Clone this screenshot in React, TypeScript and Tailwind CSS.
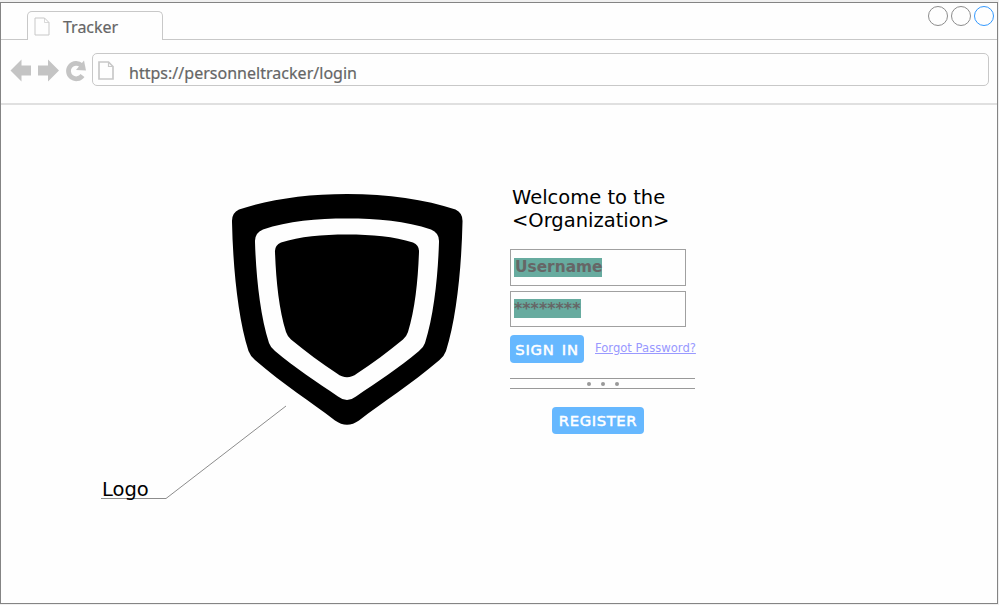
import React from "react";

const PageIcon = ({ className, width }: { className: string; width: number }) => (
  <svg className={className} viewBox="0 0 16 19" fill="none" stroke="#c8c8c8" strokeWidth={width}>
    <path d="M1 1H10.5L15 5.5V18H1Z" />
    <path d="M10.5 1V5.5H15" strokeWidth={width * 0.7} />
  </svg>
);

const Shield = () => (
  <svg className="block h-[234px] w-[234px]" viewBox="230 193 234 234">
    <path d="M347.300 194C306 194 269 199.500 239 209.500Q231.500 213 232 222C233 268 238 318 248.500 351Q250 355.500 255 360C284 385 311 402 335 420.500Q347 429 359 420.500C383 402 410 385 439.500 360Q444.500 355.500 446 351C456.500 318 461.500 268 462.500 222Q463 213 455.500 209.500C425 199.500 388 194 347.300 194Z" />
    <path
      fill="#fefefe"
      d="M347 218.500C317 218.500 288 221 263 229.500Q254.500 233 255 242C256 275 260 315 269 343Q270.500 347.500 275 351C295 368 317 382 338 396.500Q347 403.500 356 396.500C377 382 399 368 419 351Q423.500 347.500 425 343C434 315 438 275 439 242Q439.500 233 431 229.500C406 221 377 218.500 347 218.500Z"
    />
    <path d="M347 234.500C322 234.500 300 236.500 281 242.500Q274.500 245.500 275 252C276 280 279 310 286 332Q287.500 336.500 291 339.500C306 352 321 363 337 373.500Q347 381 357 373.500C373 363 388 352 403 339.500Q406.500 336.500 408 332C415 310 418 280 419 252Q419.500 245.500 413 242.500C394 236.500 372 234.500 347 234.500Z" />
  </svg>
);

const Callout = () => (
  <svg className="block h-[94px] w-[186px]" viewBox="101 405 186 94" fill="none" stroke="#8c8c8c">
    <path d="M101 498.500H166L286 406" />
  </svg>
);

const NavIcons = () => (
  <svg className="block h-[24px] w-[78px]" viewBox="10 59 78 24">
    <g fill="#c4c4c4">
      <path d="M10.500 70.500L21.500 59.500V65.500H31V75.500H21.500V81.500Z" />
      <path d="M59 70.500L48 59.500V65.500H38V75.500H48V81.500Z" />
      <path d="M84 60.500L86 70.500L76 70Z" />
    </g>
    <path d="M81.500 65.500A7.700 7.700 0 1 0 82.500 75.500" fill="none" stroke="#c4c4c4" strokeWidth="4.800" />
  </svg>
);

export default function App() {
  return (
    <div className="h-[605px] w-[999px] overflow-hidden bg-[#f0f0f0] pt-[2px] font-['DejaVu_Sans',sans-serif]">
      <div className="flex h-[602px] w-[998px] flex-col border border-[#848484] bg-[#fefefe]">
        <header className="flex h-[37px] shrink-0">
          <div className="w-[26px] border-b border-[#c8c8c8]" />
          <div className="mt-[8px] flex w-[136px] items-start rounded-t-[5px] border border-b-0 border-[#c8c8c8] pl-[6px] pt-[5px]">
            <PageIcon className="h-[19px] w-[16px]" width={1} />
            <span className="ml-[13px] mt-[-1px] font-['Noto_Sans',sans-serif] text-[16px] leading-[22px] text-[#666] [-webkit-text-stroke:0.2px_#666]">
              Tracker
            </span>
          </div>
          <div className="flex flex-1 justify-end gap-[3px] border-b border-[#c8c8c8] pr-[3px] pt-[3px]">
            <i className="size-[20px] rounded-full border border-[#8c8c8c]" />
            <i className="size-[20px] rounded-full border border-[#8c8c8c]" />
            <i className="size-[20px] rounded-full border border-[#3399ff]" />
          </div>
        </header>
        <nav className="flex h-[65px] shrink-0 border-b-2 border-[#e0e0e0] pl-[9px] pt-[13px]">
          <div className="pt-[6px]">
            <NavIcons />
          </div>
          <div className="ml-[4px] flex h-[33px] w-[897px] rounded-[5px] border border-[#c8c8c8] pl-[5px] pt-[7px]">
            <PageIcon className="h-[19px] w-[16px]" width={1.7} />
            <span className="ml-[15px] font-['Noto_Sans',sans-serif] text-[16px] leading-[24px] tracking-[0.020px] text-[#666] [-webkit-text-stroke:0.2px_#666]">
              https://personneltracker/login
            </span>
          </div>
        </nav>
        <main className="flex flex-1">
          <section className="w-[509px] shrink-0 pl-[100px] pt-[88px]">
            <div className="pl-[129px]">
              <Shield />
            </div>
            <div className="-mt-[22px] flex h-[94px]">
              <Callout />
              <span className="-ml-[185px] mt-[73px] text-[19.500px] leading-[24px] text-black">Logo</span>
            </div>
          </section>
          <section className="flex w-[188px] flex-col pt-[81px]">
            <h1 className="ml-[2px] whitespace-nowrap text-[19.500px] leading-[23px] text-black">
              Welcome to the
              <br />
              &lt;Organization&gt;
            </h1>
            <div className="mt-[17px] flex h-[37px] w-[176px] border border-[#a0a0a0] pl-[3px] pt-[8px]">
              <span className="h-[19px] w-[88px] whitespace-nowrap bg-[#67ab9f] pl-[1px] text-[15.400px] font-bold leading-[19px] text-[#666]">
                Username
              </span>
            </div>
            <div className="mt-[5px] flex h-[36px] w-[176px] border border-[#a0a0a0] pl-[3px] pt-[7px]">
              <span className="h-[19px] w-[67px] whitespace-nowrap bg-[#67ab9f] text-[15.900px] font-bold leading-[20px] text-[#666]">
                ********
              </span>
            </div>
            <div className="mt-[8px] flex">
              <button className="h-[28px] w-[74px] whitespace-nowrap rounded-[4px] bg-[#66b8ff] text-[14.800px] leading-[29px] tracking-[0.700px] text-white [-webkit-text-stroke:0.500px_white] [word-spacing:2px]">
                SIGN IN
              </button>
              <a className="ml-[11px] mt-[4px] whitespace-nowrap text-[11.600px] leading-[19px] text-[#9999ff] underline">
                Forgot Password?
              </a>
            </div>
            <div className="mt-[15px] flex h-[11px] w-[185px] items-center justify-center gap-[10px] border-y border-[#999]">
              <i className="size-[4px] rounded-full bg-[#999]" />
              <i className="size-[4px] rounded-full bg-[#999]" />
              <i className="size-[4px] rounded-full bg-[#999]" />
            </div>
            <button className="ml-[42px] mt-[18px] h-[27px] w-[92px] rounded-[4px] bg-[#66b8ff] text-[14.800px] leading-[28px] tracking-[0.600px] text-white [-webkit-text-stroke:0.500px_white]">
              REGISTER
            </button>
          </section>
        </main>
      </div>
    </div>
  );
}
